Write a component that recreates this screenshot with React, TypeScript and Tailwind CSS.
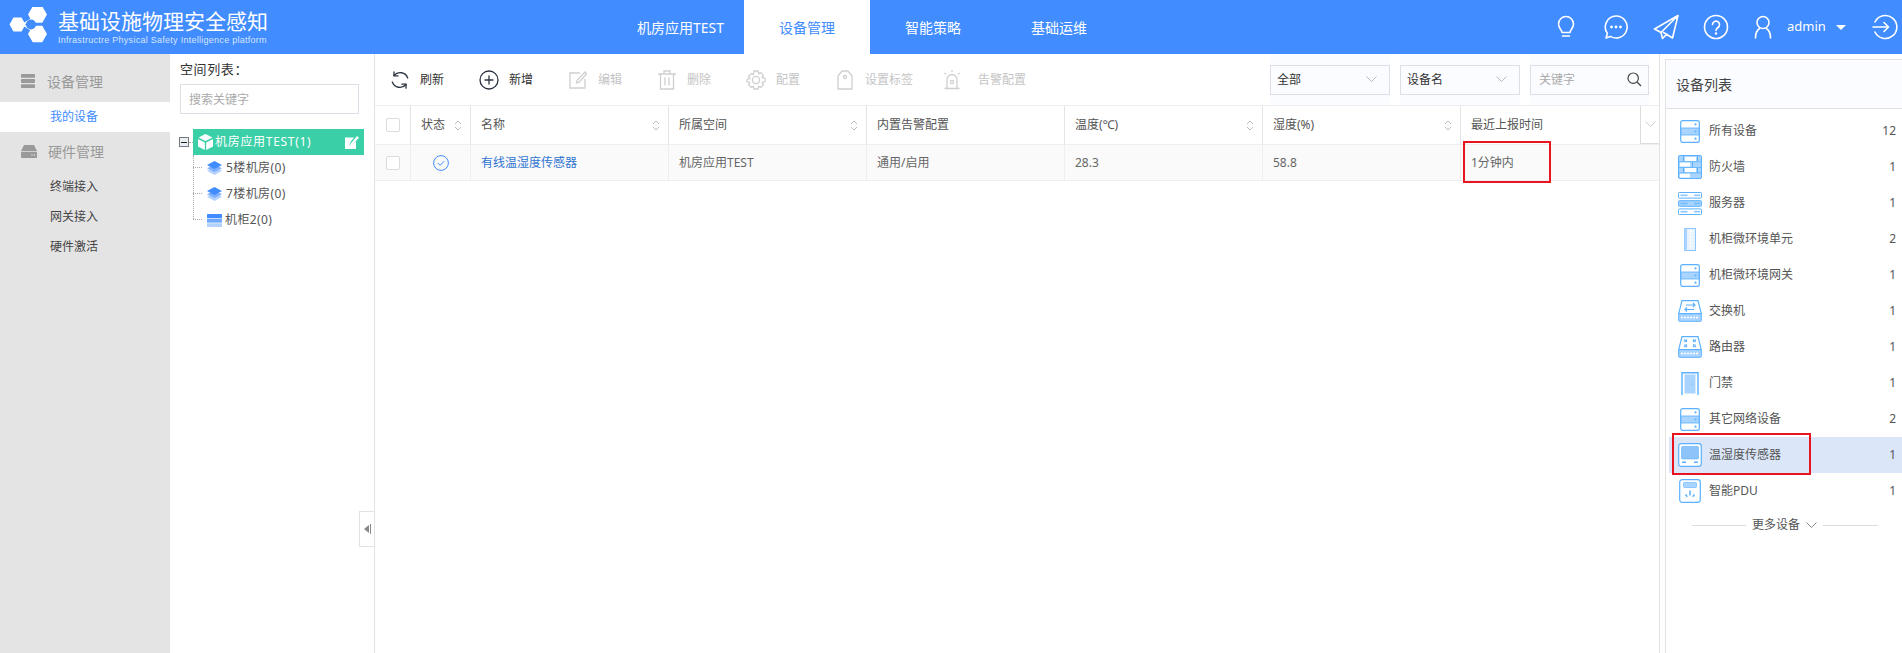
import React from "react";

const FONT = { fontFamily: '"Noto Sans", "Noto Sans CJK SC", sans-serif' };

function Logo() {
  const hex = (cx: number, cy: number, r: number) => {
    const p = [0, 1, 2, 3, 4, 5].map((i) => {
      const a = (Math.PI / 3) * i;
      return `${cx + r * Math.cos(a)},${cy + r * Math.sin(a)}`;
    });
    return p.join(" ");
  };
  return (
    <svg width="40" height="40" viewBox="0 0 40 40" className="shrink-0">
      <polygon points={hex(28.5, 7.5, 9.5)} fill="#fff" />
      <polygon points={hex(8.5, 17.5, 8)} fill="#fff" />
      <polygon points={hex(28.5, 27, 9.5)} fill="#fff" />
      <path d="M14 17.5 24 11M14 17.5 24 24" stroke="#fff" strokeWidth="2" />
      <circle cx="22" cy="17.5" r="5" fill="#418cff" />
    </svg>
  );
}

function HeaderIcons() {
  const s = { fill: "none", stroke: "#fff", strokeWidth: 1.6, strokeLinecap: "round" as const, strokeLinejoin: "round" as const };
  return (
    <div className="flex items-center text-white">
      <svg width="24" height="26" viewBox="0 0 24 26" {...s} className="mr-[25px]">
        <path d="M8 18.5c0-2.5-3.5-4-3.5-8.5a7.5 7.5 0 0 1 15 0c0 4.5-3.5 6-3.5 8.5z" />
        <path d="M8.5 22h7" />
      </svg>
      <svg width="26" height="26" viewBox="0 0 26 26" {...s} className="mr-[24px]">
        <path d="M13 2a11 11 0 1 1-5.6 20.4L3 24l1.4-4.6A11 11 0 0 1 13 2z" />
        <circle cx="8.5" cy="13" r="0.6" fill="#fff" />
        <circle cx="13" cy="13" r="0.6" fill="#fff" />
        <circle cx="17.5" cy="13" r="0.6" fill="#fff" />
      </svg>
      <svg width="26" height="26" viewBox="0 0 26 26" {...s} className="mr-[24px]">
        <path d="M25 1.5 1.5 15l6.5 3.5zM25 1.5 8 18.5l1.5 6 4.5-4.5M25 1.5 19.5 24l-9-5.5" />
      </svg>
      <svg width="26" height="26" viewBox="0 0 26 26" {...s} className="mr-[25px]">
        <circle cx="13" cy="13" r="11.5" />
        <path d="M9.5 10.5a3.5 3.5 0 1 1 5.5 3c-1.3.9-2 1.5-2 3" />
        <circle cx="13" cy="19.5" r="0.5" fill="#fff" />
      </svg>
      <svg width="18" height="24" viewBox="0 0 18 24" {...s} className="mr-[15px]">
        <circle cx="9" cy="7.5" r="6" />
        <path d="M1.5 23c0-5 2.5-8.5 4-9.5M16.5 23c0-5-2.5-8.5-4-9.5" />
      </svg>
      <span className="text-[13px] w-[36px]">admin</span>
      <span className="ml-[13px] mr-[26px] w-0 h-0 border-l-[5px] border-r-[5px] border-t-[5px] border-l-transparent border-r-transparent border-t-white" />
      <svg width="26" height="26" viewBox="0 0 26 26" {...s}>
        <path d="M3 8a11.5 11.5 0 1 1 0 10" />
        <path d="M1 13h15M12 8.5l4.5 4.5-4.5 4.5" />
      </svg>
    </div>
  );
}

function TopBar() {
  const tab = "h-full flex items-center text-[14px] text-white";
  return (
    <header className="h-[54px] shrink-0 bg-[#418cff] flex items-center">
      <div className="flex items-center pl-[9px] w-[637px]">
        <Logo />
        <div className="ml-[9px]">
          <div className="text-[21px] leading-[26px] text-white">基础设施物理安全感知</div>
          <div className="text-[9px] leading-[12px] text-[#d5e5ff]" style={{ fontFamily: '"Liberation Sans", sans-serif', letterSpacing: "0.27px" }}>
            Infrastructre Physical Safety Intelligence platform
          </div>
        </div>
      </div>
      <nav className="flex h-full">
        <div className={`${tab} w-[107px]`}>机房应用TEST</div>
        <div className="h-full w-[126px] bg-white text-[#418cff] text-[14px] flex items-center justify-center">设备管理</div>
        <div className={`${tab} w-[91px] ml-[35px]`}>智能策略</div>
        <div className={`${tab} w-[56px] ml-[35px]`}>基础运维</div>
      </nav>
      <div className="flex-1" />
      <div className="pr-[4px]">
        <HeaderIcons />
      </div>
    </header>
  );
}

function Sidebar() {
  return (
    <aside className="w-[170px] shrink-0 bg-[#e4e4e4]">
      <div className="h-[48px] flex items-center pl-[21px] pt-[6px]">
        <svg width="14" height="14" viewBox="0 0 14 14" fill="#9a9a9a">
          <rect x="0" y="0" width="14" height="3.8" rx="0.8" />
          <rect x="0" y="5.1" width="14" height="3.8" rx="0.8" />
          <rect x="0" y="10.2" width="14" height="3.8" rx="0.8" />
        </svg>
        <span className="ml-[12px] text-[14px] text-[#999]">设备管理</span>
      </div>
      <div className="h-[30px] bg-white flex items-center pl-[50px] text-[12px] text-[#418cff]">我的设备</div>
      <div className="h-[40px] flex items-center pl-[21px] pb-[2px]">
        <svg width="16" height="13" viewBox="0 0 16 13" fill="#9a9a9a">
          <path d="M3 0h10l3 6H0z" />
          <rect x="0" y="6.8" width="16" height="6.2" rx="0.8" />
          <circle cx="11" cy="10" r="0.7" fill="#e4e4e4" />
          <circle cx="13.4" cy="10" r="0.7" fill="#e4e4e4" />
        </svg>
        <span className="ml-[11px] text-[14px] text-[#999]">硬件管理</span>
      </div>
      {["终端接入", "网关接入", "硬件激活"].map((t) => (
        <div key={t} className="h-[30px] flex items-center pl-[50px] text-[12px] text-[#444]">
          {t}
        </div>
      ))}
    </aside>
  );
}

function Layers() {
  return (
    <svg width="15" height="15" viewBox="0 0 15 15">
      <path d="M7.5 6 15 9.7 7.5 14 0 9.7z" fill="#b4d2ff" />
      <path d="M7.5 3.5 15 7.2 7.5 11 0 7.2z" fill="#7fb0ff" />
      <path d="M7.5 0 15 4 7.5 8 0 4z" fill="#418cff" />
    </svg>
  );
}

function SpaceTree() {
  const child = "relative h-[26px] flex items-center text-[12px] text-[#555] tracking-[0.4px]";
  const dash = "absolute left-[-14px] top-[12px] w-[9px] border-t border-dotted border-[#aaa]";
  return (
    <section className="w-[205px] shrink-0 border-r border-[#e2e2e2] pl-[10px] pr-[15px] relative">
      <div className="h-[30px] pt-[6px] text-[13px] leading-[18px] text-[#333] tracking-[0.6px]">空间列表：</div>
      <input
        readOnly
        placeholder="搜索关键字"
        className="block w-[179px] h-[30px] border border-[#dcdfe6] px-[8px] text-[12px] text-[#333] placeholder:text-[#aaa] outline-none bg-white"
      />
      <div className="mt-[15px] flex items-center w-[185px] -ml-[1px]">
        <span className="relative w-[10px] h-[10px] border border-[#777] bg-[#e8eef5] shrink-0 flex items-center justify-center">
          <span className="w-[6px] h-[1px] bg-[#222]" />
        </span>
        <span className="w-[4px] border-t border-dotted border-[#aaa]" />
        <div className="flex-1 h-[26px] bg-[#3bcfa8] text-white text-[12px] flex items-center pl-[5px] pr-[5px] tracking-[0.7px]">
          <svg width="15" height="16" viewBox="0 0 15 16" fill="#fff">
            <path d="M7.5 0 14.5 3.5 7.5 7 .5 3.5z" />
            <path d="M0 5l6.8 3.4V16L0 12.4zM15 5 8.2 8.4V16l6.8-3.6z" />
          </svg>
          <span className="ml-[2px]">机房应用TEST(1)</span>
          <span className="flex-1" />
          <svg width="14" height="13" viewBox="0 0 14 13" fill="#fff">
            <path d="M0 1.5h9L5.5 6 4.5 9.5 8 8.2l3-3.2V13H0z" />
            <path d="M12 0l2 1.7-7 7.5-2 .6.6-2z" />
          </svg>
        </div>
      </div>
      <div className="ml-[27px] relative">
        <span className="absolute left-[-14px] top-0 h-[64px] border-l border-dotted border-[#aaa]" />
        <div className={child}>
          <span className={dash} />
          <Layers />
          <span className="ml-[4px]">5楼机房(0)</span>
        </div>
        <div className={child}>
          <span className={dash} />
          <Layers />
          <span className="ml-[4px]">7楼机房(0)</span>
        </div>
        <div className={child}>
          <span className={dash} />
          <svg width="15" height="13" viewBox="0 0 15 13">
            <rect y="0" width="15" height="4" rx="0.6" fill="#418cff" />
            <rect y="4.6" width="15" height="4" fill="#6ea8ff" />
            <rect y="9.2" width="15" height="3.8" rx="0.6" fill="#b4d2ff" />
          </svg>
          <span className="ml-[3px]">机柜2(0)</span>
        </div>
      </div>
      <div className="absolute right-[-1px] top-[457px] w-[16px] h-[36px] border border-[#e2e2e2] bg-white flex items-center justify-center gap-[1px]">
        <span className="w-0 h-0 border-y-[4px] border-r-[5px] border-y-transparent border-r-[#888]" />
        <span className="w-[1px] h-[10px] bg-[#888]" />
      </div>
    </section>
  );
}

function ToolBtn({ label, off, icon, w, gap = 10 }: { label: string; off?: boolean; icon: React.ReactNode; w: number; gap?: number }) {
  return (
    <div className="flex items-center h-full shrink-0" style={{ width: w }}>
      <span className="w-[20px] h-[20px] flex items-center justify-center shrink-0">{icon}</span>
      <span className={`text-[12px] ${off ? "text-[#c4c4c4]" : "text-[#333]"}`} style={{ marginLeft: gap }}>{label}</span>
    </div>
  );
}

function Toolbar() {
  const off = { fill: "none", stroke: "#cfcfcf", strokeWidth: 1.3 };
  const on = { fill: "none", stroke: "#2c3440", strokeWidth: 1.3, strokeLinecap: "round" as const };
  return (
    <div className="h-[51px] shrink-0 flex items-center pl-[15px] pr-[10px]">
      <ToolBtn w={89} label="刷新" icon={
        <svg width="18" height="18" viewBox="0 0 18 18" {...on}>
          <path d="M3 4.5A8 8 0 0 1 16.7 7M15 13.5A8 8 0 0 1 1.3 11" />
          <path d="M3 .8v4h4M15 17.2v-4h-4" />
        </svg>} />
      <ToolBtn w={89} label="新增" icon={
        <svg width="20" height="20" viewBox="0 0 20 20" {...on}>
          <circle cx="10" cy="10" r="9" />
          <path d="M10 6v8M6 10h8" />
        </svg>} />
      <ToolBtn w={89} off label="编辑" icon={
        <svg width="18" height="18" viewBox="0 0 18 18" {...off}>
          <path d="M11 2H1v15h15V8" />
          <path d="M16 1 8 9.5 7.5 12l2.5-.6L17.5 3z" />
        </svg>} />
      <ToolBtn w={89} off label="删除" icon={
        <svg width="18" height="20" viewBox="0 0 18 20" {...off}>
          <path d="M0 4h18M6 4V1h6v3M2.5 4v15h13V4M7 7.5v8M11 7.5v8" />
        </svg>} />
      <ToolBtn w={89} off label="配置" icon={
        <svg width="20" height="20" viewBox="0 0 20 20" {...off}>
          <path d="M8 1h4l.6 2.6 2-1 2.8 2.8-1.2 2.2 2.8.6v3.6l-2.8.6 1.2 2.2-2.8 2.8-2-1L12 19H8l-.6-2.6-2 1-2.8-2.8 1.2-2.2-2.8-.6V9.2l2.8-.6-1.2-2.2 2.8-2.8 2 1z" />
          <circle cx="10" cy="10" r="3.6" />
        </svg>} />
      <ToolBtn w={107} off label="设置标签" icon={
        <svg width="16" height="20" viewBox="0 0 16 20" {...off}>
          <path d="M5 1h6l4 5v13H1V6z" />
          <circle cx="8" cy="7" r="1.5" />
        </svg>} />
      <ToolBtn w={92} gap={16} off label="告警配置" icon={
        <svg width="20" height="20" viewBox="0 0 20 20" {...off}>
          <path d="M5 18V9.5a5 5 0 0 1 10 0V18M2.5 18.5h15" />
          <circle cx="10" cy="12" r="1.6" />
          <path d="M10 0v2M2.5 3l1.5 1.5M17.5 3 16 4.5" />
        </svg>} />
      <div className="flex-1" />
      <Select label="全部" />
      <Select label="设备名" />
      <div className="h-full flex items-center bg-[#fbfcff]">
        <div className="w-[119px] h-[30px] border border-[#dcdfe6] flex items-center justify-between pl-[8px] pr-[6px]">
          <span className="text-[12px] text-[#aaa]">关键字</span>
          <svg width="15" height="15" viewBox="0 0 15 15" fill="none" stroke="#444" strokeWidth="1.2">
            <circle cx="6.2" cy="6.2" r="5.2" />
            <path d="M10 10l4 4" />
          </svg>
        </div>
      </div>
    </div>
  );
}

function Chevron({ color = "#bbb" }: { color?: string }) {
  return (
    <svg width="11" height="7" viewBox="0 0 11 7" fill="none" stroke={color} strokeWidth="1">
      <path d="M.5.5l5 5 5-5" />
    </svg>
  );
}

function Select({ label }: { label: string }) {
  return (
    <div className="h-full flex items-center mr-[10px] bg-[#fbfcff]">
      <div className="w-[120px] h-[30px] border border-[#dcdfe6] flex items-center justify-between pl-[6px] pr-[12px]">
        <span className="text-[12px] text-[#333]">{label}</span>
        <Chevron />
      </div>
    </div>
  );
}

function Sort() {
  return (
    <svg width="8" height="11" viewBox="0 0 8 11" fill="none" stroke="#bbb" strokeWidth="1">
      <path d="M1 4l3-3 3 3M1 7l3 3 3-3" />
    </svg>
  );
}

function Box() {
  return <span className="block w-[14px] h-[14px] border border-[#dcdcdc] bg-white rounded-[2px]" />;
}

const COLS = "grid grid-cols-[36px_60px_198px_198px_198px_198px_198px_198px]";

function Table() {
  const th = "h-[38px] flex items-center justify-between pl-[10px] pr-[8px] border-r border-[#e4e4e4] text-[12px] text-[#555]";
  const td = "h-[35px] flex items-center pl-[10px] border-r border-[#eeeef2] text-[12px]";
  return (
    <div>
      <div className={`${COLS} border-y border-[#eeeef2]`}>
        <div className="h-[38px] flex items-center justify-center border-r border-[#e4e4e4]"><Box /></div>
        <div className={th}><span>状态</span><Sort /></div>
        <div className={th}><span>名称</span><Sort /></div>
        <div className={th}><span>所属空间</span><Sort /></div>
        <div className={th}><span>内置告警配置</span></div>
        <div className={th}><span>温度(℃)</span><Sort /></div>
        <div className={th}><span>湿度(%)</span><Sort /></div>
        <div className="relative h-[38px] flex items-center pl-[10px] text-[12px] text-[#555]">
          <span>最近上报时间</span>
          <span className="absolute right-0 top-0 w-[19px] h-[38px] border-l border-b border-[#dcdcdc] bg-white flex items-center justify-center">
            <Chevron color="#ccc" />
          </span>
        </div>
      </div>
      <div className={`${COLS} bg-[#fafafa] border-b border-[#eeeef2]`}>
        <div className="h-[35px] flex items-center justify-center border-r border-[#eeeef2]"><Box /></div>
        <div className="h-[35px] flex items-center justify-center border-r border-[#eeeef2]">
          <svg width="16" height="16" viewBox="0 0 16 16" fill="none" stroke="#418cff" strokeWidth="1">
            <circle cx="8" cy="8" r="7.4" />
            <path d="M4.8 8l2.3 2.3 4.2-4.2" />
          </svg>
        </div>
        <div className={`${td} text-[#2f74d0]`}>有线温湿度传感器</div>
        <div className={`${td} text-[#666]`}>机房应用TEST</div>
        <div className={`${td} text-[#666]`}>通用/启用</div>
        <div className={`${td} text-[#666]`}>28.3</div>
        <div className={`${td} text-[#666]`}>58.8</div>
        <div className="relative h-[35px] flex items-center pl-[10px] text-[12px] text-[#666]">
          1分钟内
          <span className="absolute left-[2px] top-[-4px] w-[88px] h-[42px] border-2 border-[#e8141f]" />
        </div>
      </div>
    </div>
  );
}

const B = "#5bb1ff";
const F = "#a9d4ff";

function RackIcon() {
  return (
    <svg width="20" height="23" viewBox="0 0 20 23">
      <rect x="0.7" y="0.7" width="18.6" height="21.6" rx="2" fill="#fff" stroke={B} strokeWidth="1.2" />
      <rect x="1" y="8" width="18" height="7" fill={F} stroke={B} strokeWidth="0.8" />
      <circle cx="15.5" cy="4.3" r="1.1" fill={B} />
      <circle cx="15.5" cy="11.5" r="1.1" fill={B} />
      <circle cx="15.5" cy="18.7" r="1.1" fill={B} />
    </svg>
  );
}
function WallIcon() {
  return (
    <svg width="24" height="24" viewBox="0 0 24 24">
      <rect x="0.5" y="0.5" width="23" height="23" rx="1.5" fill={F} stroke={B} />
      <g fill="#fff">
        <rect x="7" y="2" width="11" height="4" />
        <rect x="2" y="7.5" width="10" height="4" />
        <rect x="7" y="13" width="11" height="4" />
        <rect x="2" y="18.5" width="10" height="4" />
      </g>
      <g fill={B}>
        <rect x="5" y="1" width="1" height="5" />
        <rect x="19" y="1" width="1" height="5" />
        <rect x="14" y="7" width="1" height="5" />
        <rect x="19" y="13" width="1" height="5" />
        <rect x="5" y="13" width="1" height="5" />
        <rect x="0.5" y="6.3" width="23" height="0.8" />
        <rect x="0.5" y="12" width="23" height="0.8" />
        <rect x="0.5" y="17.5" width="23" height="0.8" />
      </g>
    </svg>
  );
}
function ServerIcon() {
  const row = (y: number, fill: string) => (
    <g key={y}>
      <rect x="0.5" y={y} width="23" height="5.6" rx="0.8" fill={fill} stroke={B} />
      <rect x="2.5" y={y + 2} width="7" height="1.6" fill={B} opacity="0.7" />
      <rect x="16" y={y + 2} width="6" height="1.6" fill={B} opacity="0.7" />
    </g>
  );
  return (
    <svg width="24" height="23" viewBox="0 0 24 23">
      {row(0.5, "#fff")}
      {row(8.7, F)}
      {row(16.9, "#fff")}
    </svg>
  );
}
function CabinetIcon() {
  return (
    <svg width="12" height="23" viewBox="0 0 12 23">
      <rect x="0.5" y="0.5" width="11" height="22" fill="#e8f3ff" stroke="#8cc6ff" />
      <rect x="0.5" y="0.5" width="2.5" height="22" fill={F} />
      <path d="M5 3h4M5 6h4M5 9h4M5 12h4M5 15h4M5 18h4" stroke="#fff" />
    </svg>
  );
}
function SwitchIcon({ router }: { router?: boolean }) {
  return (
    <svg width="24" height="22" viewBox="0 0 24 22">
      <path d="M4 .7h16l3.3 13H.7z" fill="#fff" stroke={B} strokeWidth="1.2" />
      <rect x="0.7" y="13.7" width="22.6" height="7.6" rx="0.8" fill={F} stroke={B} />
      <path d="M3 17.5h18" stroke="#fff" strokeWidth="1.6" strokeDasharray="2 1" />
      {router ? (
        <path d="M6 3.5l3 2.5M6.5 6l2.5-2.5M18 3.5l-3 2.5M17.5 6l-2.5-2.5M6 11l3-2.5M6.5 8.5 9 11M18 11l-3-2.5M17.5 8.5 15 11" stroke={B} strokeWidth="1.1" fill="none" />
      ) : (
        <path d="M8 5h9M15 3l2 2-2 2M16 9.5H7M9 7.5l-2 2 2 2" stroke={B} strokeWidth="1.2" fill="none" />
      )}
    </svg>
  );
}
function DoorIcon() {
  return (
    <svg width="18" height="23" viewBox="0 0 18 23">
      <path d="M1 23V.8h16V23" fill="none" stroke={B} strokeWidth="1.4" />
      <rect x="3.5" y="2.5" width="11" height="19" fill={F} />
      <circle cx="11" cy="12" r="0.6" fill={B} />
    </svg>
  );
}
function SensorIcon() {
  return (
    <svg width="24" height="24" viewBox="0 0 24 24">
      <rect x="0.7" y="0.7" width="22.6" height="22.6" rx="2.5" fill="#fff" stroke={B} strokeWidth="1.2" />
      <rect x="3.5" y="3.5" width="17" height="12.5" rx="1.2" fill="#8dc3f8" stroke={B} strokeWidth="0.6" />
      <rect x="4" y="18.5" width="4" height="1.5" fill={B} />
      <rect x="16" y="18.5" width="4" height="1.5" fill={B} />
    </svg>
  );
}
function PduIcon() {
  return (
    <svg width="22" height="24" viewBox="0 0 22 24">
      <rect x="0.7" y="0.7" width="20.6" height="22.6" rx="2.5" fill="#fff" stroke={B} strokeWidth="1.2" />
      <rect x="4.5" y="3.5" width="13" height="5" rx="1" fill={F} stroke={B} strokeWidth="0.6" />
      <path d="M11 11.5v5M6.5 15.5l1.8 2.2M15.5 15.5l-1.8 2.2" stroke={B} strokeWidth="1.5" />
    </svg>
  );
}

const DEVICES: { name: string; count: number; icon: React.ReactNode; on?: boolean }[] = [
  { name: "所有设备", count: 12, icon: <RackIcon /> },
  { name: "防火墙", count: 1, icon: <WallIcon /> },
  { name: "服务器", count: 1, icon: <ServerIcon /> },
  { name: "机柜微环境单元", count: 2, icon: <CabinetIcon /> },
  { name: "机柜微环境网关", count: 1, icon: <RackIcon /> },
  { name: "交换机", count: 1, icon: <SwitchIcon /> },
  { name: "路由器", count: 1, icon: <SwitchIcon router /> },
  { name: "门禁", count: 1, icon: <DoorIcon /> },
  { name: "其它网络设备", count: 2, icon: <RackIcon /> },
  { name: "温湿度传感器", count: 1, icon: <SensorIcon />, on: true },
  { name: "智能PDU", count: 1, icon: <PduIcon /> },
];

function DevicePanel() {
  return (
    <section className="flex-1 ml-[5px] mt-[5px] border-l border-t border-[#e2e2e2] min-w-0">
      <div className="h-[49px] bg-[#fbfcff] border-b border-[#e0e0e6] flex items-center pl-[10px] pt-[2px] text-[14px] leading-none text-[#444]">
        设备列表
      </div>
      <div className="pt-[4px] pl-[3px]">
        {DEVICES.map((d) => (
          <div key={d.name} className={`relative h-[36px] flex items-center pr-[6px] text-[12px] text-[#555] ${d.on ? "bg-[#dbe7f8]" : ""}`}>
            <span className="w-[36px] pl-[5px] flex items-center justify-center shrink-0">{d.icon}</span>
            <span className="ml-[4px] flex-1">{d.name}</span>
            <span className="text-[#555]">{d.count}</span>
            {d.on && <span className="absolute left-[3px] top-[-4px] w-[139px] h-[42px] border-2 border-[#e8141f]" />}
          </div>
        ))}
      </div>
      <div className="mt-[7px] flex items-center pl-[26px] pr-[8px] text-[12px] text-[#555]">
        <span className="w-[54px] border-t border-[#dcdcdc]" />
        <span className="mx-[6px]">更多设备</span>
        <Chevron color="#888" />
        <span className="ml-[6px] w-[55px] border-t border-[#dcdcdc]" />
      </div>
    </section>
  );
}

export default function App() {
  return (
    <div className="w-full h-[653px] flex flex-col overflow-hidden bg-white" style={FONT}>
      <TopBar />
      <div className="flex-1 flex min-h-0">
        <Sidebar />
        <SpaceTree />
        <main className="w-[1285px] shrink-0 border-r border-[#e2e2e2] min-w-0">
          <Toolbar />
          <Table />
        </main>
        <DevicePanel />
      </div>
    </div>
  );
}
